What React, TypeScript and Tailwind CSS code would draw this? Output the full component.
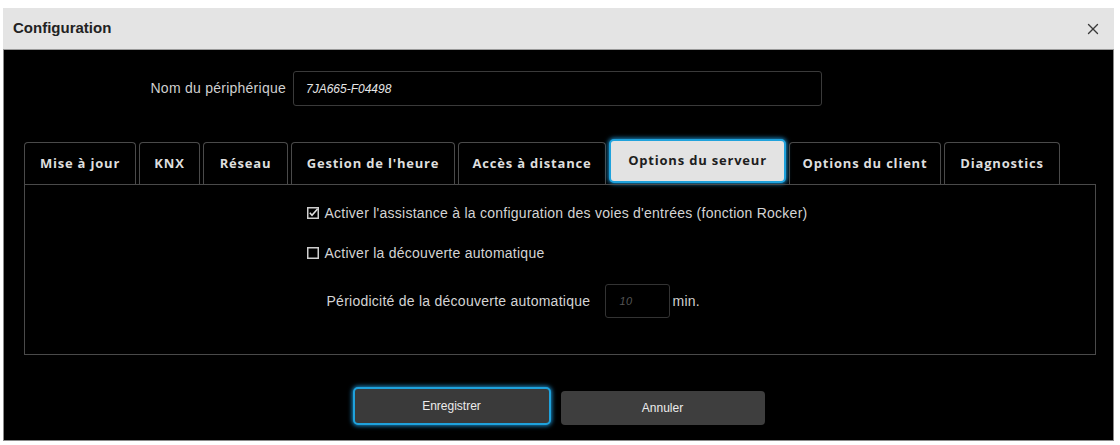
import { X } from 'lucide-react';

const tabs = [
  { label: 'Mise à jour', w: 'w-[112px]' },
  { label: 'KNX', w: 'w-[61px]' },
  { label: 'Réseau', w: 'w-[85px]' },
  { label: "Gestion de l'heure", w: 'w-[164px]' },
  { label: 'Accès à distance', w: 'w-[148px]' },
  { label: 'Options du serveur', w: 'w-[177px]', active: true },
  { label: 'Options du client', w: 'w-[152px]' },
  { label: 'Diagnostics', w: 'w-[116px]' },
];

function Check({ checked }: { checked?: boolean }) {
  return (
    <svg width="12" height="12" viewBox="0 0 12 12" className="shrink-0">
      <rect x="0.75" y="0.75" width="10.5" height="10.5" fill="none" stroke="#cfcfcf" strokeWidth="1.5" />
      {checked && <path d="M2.8 5.8 L5 8.2 L10.5 2" fill="none" stroke="#e0e0e0" strokeWidth="1.6" />}
    </svg>
  );
}

export default function App() {
  return (
    <div className="w-[1120px] h-[445px] bg-white pt-[8px] pl-[3px] font-['Liberation_Sans',Arial,sans-serif]">
      <div className="w-[1111px] flex flex-col">
        {/* Title bar */}
        <div className="h-[42px] bg-[#e4e4e4] border-b border-[#9a9a9a] flex items-center justify-between pl-[10px] pr-[12px]">
          <span className="text-[15px] font-bold text-[#222]">Configuration</span>
          <X size={18} strokeWidth={1.8} className="text-[#3a3a3a]" />
        </div>

        {/* Body */}
        <div className="h-[391px] bg-black border-x border-b border-[#8a8a8a] flex flex-col">
          {/* Device name */}
          <div className="flex items-center gap-[7px] pt-[21px]">
            <span className="w-[282px] text-right text-[14px] tracking-[0.25px] text-[#cfcfcf]">Nom du périphérique</span>
            <div className="w-[529px] h-[35px] border border-[#3a3a3a] rounded-[3px] flex items-center px-[12px]">
              <span className="text-[12px] italic text-[#e6e6e6]">7JA665-F04498</span>
            </div>
          </div>

          {/* Tabs */}
          <div className="flex items-end gap-[3px] pl-[20px] mt-[33px] font-['Open_Sans',sans-serif] text-[13px] font-bold tracking-[0.8px]">
            {tabs.map((t) =>
              t.active ? (
                <div
                  key={t.label}
                  className={`${t.w} h-[44px] mb-[1px] rounded-[5px] border-2 border-[#1fa2dc] shadow-[0_0_4px_1px_#1a86c0] bg-[#e3e3e3] flex items-center justify-center text-[#1e1e1e]`}
                >
                  {t.label}
                </div>
              ) : (
                <div
                  key={t.label}
                  className={`${t.w} h-[42px] rounded-t-[4px] border-x border-t border-[#4a4a4a] flex items-center justify-center text-[#dedede]`}
                >
                  {t.label}
                </div>
              ),
            )}
          </div>

          {/* Panel */}
          <div className="ml-[20px] w-[1072px] h-[171px] border border-[#4a4a4a] flex justify-center">
            <div className="flex flex-col pt-[19px] ml-[-6px] text-[14px] tracking-[0.25px] text-[#d4d4d4]">
              <div className="flex items-center gap-[6px] h-[18px]">
                <Check checked />
                <span>Activer l'assistance à la configuration des voies d'entrées (fonction Rocker)</span>
              </div>
              <div className="flex items-center gap-[6px] h-[18px] mt-[22px]">
                <Check />
                <span>Activer la découverte automatique</span>
              </div>
              <div className="flex items-center pl-[20px] mt-[22px]">
                <span className="w-[278px]">Périodicité de la découverte automatique</span>
                <div className="w-[65px] h-[34px] border border-[#333] rounded-[3px] flex items-center px-[14px]">
                  <span className="text-[11px] italic text-[#555]">10</span>
                </div>
                <span className="ml-[3px] text-[#cfcfcf]">min.</span>
              </div>
            </div>
          </div>

          {/* Actions */}
          <div className="flex items-end justify-center gap-[10px] mt-[32px]">
            <button className="w-[198px] h-[38px] rounded-[5px] border-2 border-[#1fa2dc] shadow-[0_0_4px_1px_#1a86c0] bg-[#3a3a3a] text-[12px] text-[#ececec]">
              Enregistrer
            </button>
            <button className="w-[204px] h-[34px] rounded-[4px] bg-[#3e3e3e] text-[12px] text-[#ececec]">
              Annuler
            </button>
          </div>
        </div>
      </div>
    </div>
  );
}
